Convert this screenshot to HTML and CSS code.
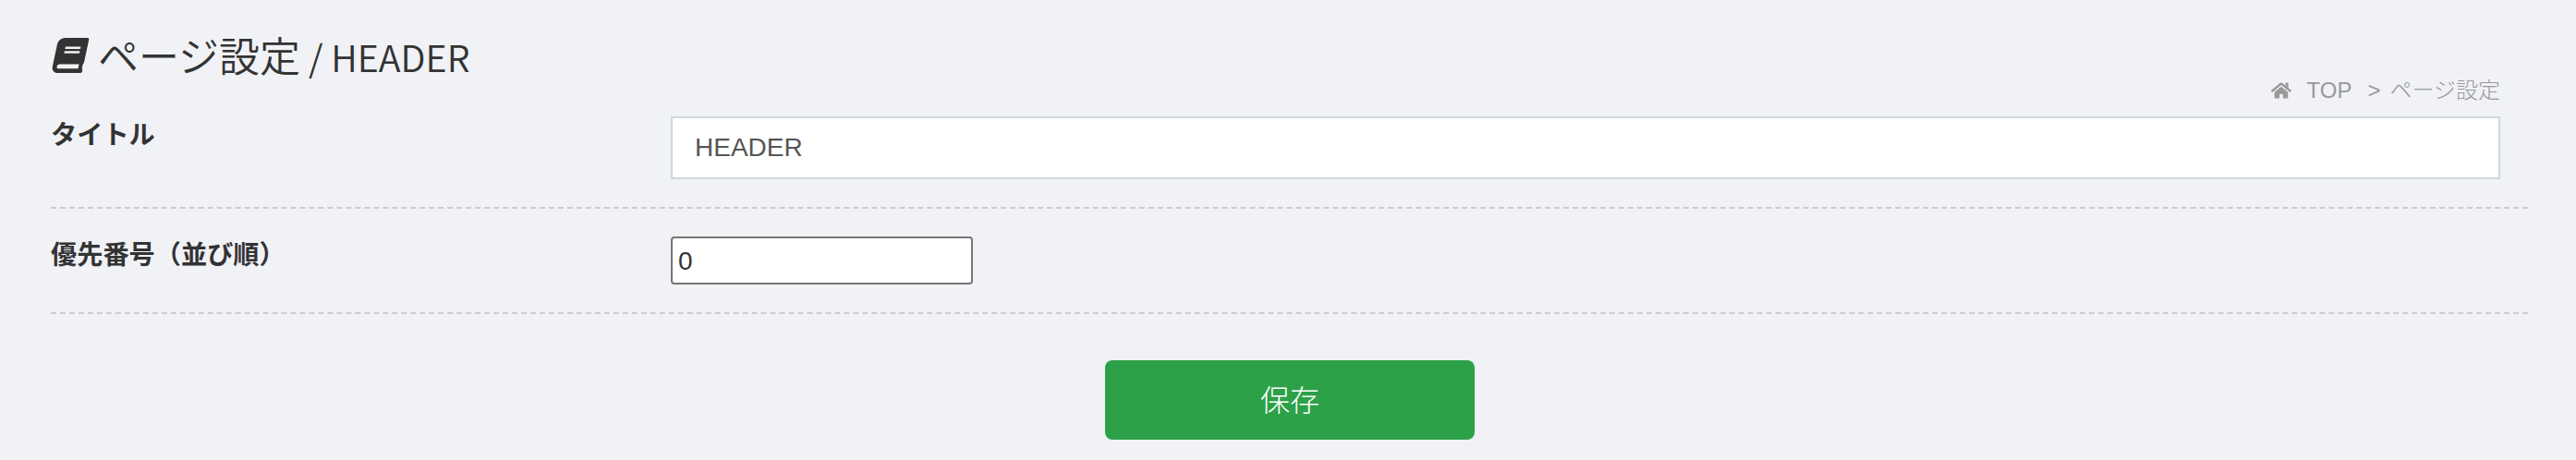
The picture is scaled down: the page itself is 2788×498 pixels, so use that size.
FILE: index.html
```html
<!DOCTYPE html>
<html lang="ja">
<head>
<meta charset="utf-8">
<title>ページ設定 / HEADER</title>
<link rel="stylesheet" href="styles.css">
</head>
<body>
<main class="page">
  <header class="head">
    <h1 class="title">
      <svg class="book" viewBox="0 0 560 512" aria-hidden="true"><path fill="#333" d="M448 360V24c0-13.300-10.700-24-24-24H96C43 0 0 43 0 96v320c0 53 43 96 96 96h328c13.300 0 24-10.700 24-24v-16c0-7.500-3.500-14.300-8.900-18.700-4.200-15.400-4.200-59.300 0-74.700 5.400-4.300 8.900-11.100 8.900-18.600zM128 134c0-3.300 2.700-6 6-6h212c3.300 0 6 2.700 6 6v20c0 3.300-2.700 6-6 6H134c-3.300 0-6-2.700-6-6v-20zm0 64c0-3.300 2.700-6 6-6h212c3.300 0 6 2.700 6 6v20c0 3.300-2.700 6-6 6H134c-3.300 0-6-2.700-6-6v-20zm253.400 250H96c-17.700 0-32-14.300-32-32 0-17.600 14.400-32 32-32h285.400c-1.900 17.100-1.900 46.900 0 64z" transform="translate(110 0) skewX(-12)"/></svg>
      <span><span class="title-ja">ページ設定</span> / HEADER</span>
    </h1>
    <nav class="crumbs">
      <svg class="home" viewBox="0 0 576 512" aria-hidden="true"><path fill="#999" d="M280.400 148.300 96 300.100V464a16 16 0 0 0 16 16l112.100-.3a16 16 0 0 0 15.900-16V368a16 16 0 0 1 16-16h64a16 16 0 0 1 16 16v95.600a16 16 0 0 0 16 16.100L464 480a16 16 0 0 0 16-16V300L295.700 148.300a12.200 12.200 0 0 0-15.300 0zM571.600 251.500 488 182.600V44.100a12 12 0 0 0-12-12h-56a12 12 0 0 0-12 12v72.600L318.500 43a48 48 0 0 0-61 0L4.300 251.500a12 12 0 0 0-1.600 16.900l25.500 31A12 12 0 0 0 45.200 301l235.200-193.700a12.200 12.200 0 0 1 15.300 0L530.900 301a12 12 0 0 0 16.900-1.600l25.500-31a12 12 0 0 0-1.700-16.900z"/></svg>
      <span class="crumb-top">TOP</span>
      <span class="crumb-sep">&gt;</span>
      <span>ページ設定</span>
    </nav>
  </header>
  <form class="form">
    <div class="row row-first">
      <label class="label">タイトル</label>
      <div class="field"><input class="text-input" type="text" value="HEADER"></div>
    </div>
    <div class="row">
      <label class="label">優先番号（並び順）</label>
      <div class="field"><input class="num-input" type="text" value="0"></div>
    </div>
    <div class="actions"><button class="save" type="button">保存</button></div>
  </form>
</main>
</body>
</html>
```
FILE: styles.css
```css
* { box-sizing: border-box; }
html, body { margin: 0; padding: 0; }
body {
  background: #f0f2f6;
  color: #333;
  font-family: "Noto Sans CJK JP", "Liberation Sans", sans-serif;
}
.page { width: 2788px; height: 498px; padding: 0 52px 0 55px; overflow: hidden; }
.head {
  height: 126px;
  display: flex;
  justify-content: space-between;
  align-items: flex-start;
  padding-right: 30px;
}
.title {
  margin: 29px 0 0;
  display: flex;
  align-items: center;
  gap: 9px;
  font-size: 39.500px;
  font-weight: 350;
  line-height: 60px;
  color: #333;
}
.title-ja { font-size: 44px; }
.book { width: 42px; height: 38px; }
.crumbs {
  margin-top: 82px;
  display: flex;
  align-items: center;
  font-family: "Liberation Sans", "Noto Sans CJK JP", sans-serif;
  font-size: 24px;
  font-weight: 300;
  line-height: 32px;
  color: #999;
}
.home { width: 22px; height: 20px; margin-right: 17px; }
.crumb-sep { margin: 0 10px 0 17px; }
.row {
  display: grid;
  grid-template-columns: 671px 1fr;
  padding: 30px 30px 30px 0;
  border-bottom: 2px dashed #ccc;
}
.row-first { padding-top: 0; }
.label {
  font-size: 28.200px;
  font-weight: 700;
  line-height: 40px;
  font-family: "Liberation Sans", "Noto Sans CJK JP", sans-serif;
}
.field { display: flex; }
.text-input {
  width: 100%;
  height: 68px;
  padding: 0 24px;
  border: 2px solid #d0d6e0;
  background: #fff;
  color: #555;
  font-family: "Liberation Sans", sans-serif;
  font-size: 28px;
  border-radius: 0;
  outline: none;
}
.num-input {
  width: 327px;
  height: 52px;
  padding: 2px 6px 0;
  border: 2px solid #767676;
  border-radius: 4px;
  background: #fff;
  color: #333;
  font-family: "Liberation Sans", sans-serif;
  font-size: 28px;
  outline: none;
}
.actions { display: flex; justify-content: center; padding: 50px 0 0 0; margin-left: 1px; }
.save {
  width: 400px;
  height: 86px;
  padding: 0 0 4px;
  border: 0;
  border-radius: 8px;
  background: #2ca147;
  color: #fff;
  font-family: "Noto Sans CJK JP", sans-serif;
  font-size: 32px;
  font-weight: 300;
}
```
